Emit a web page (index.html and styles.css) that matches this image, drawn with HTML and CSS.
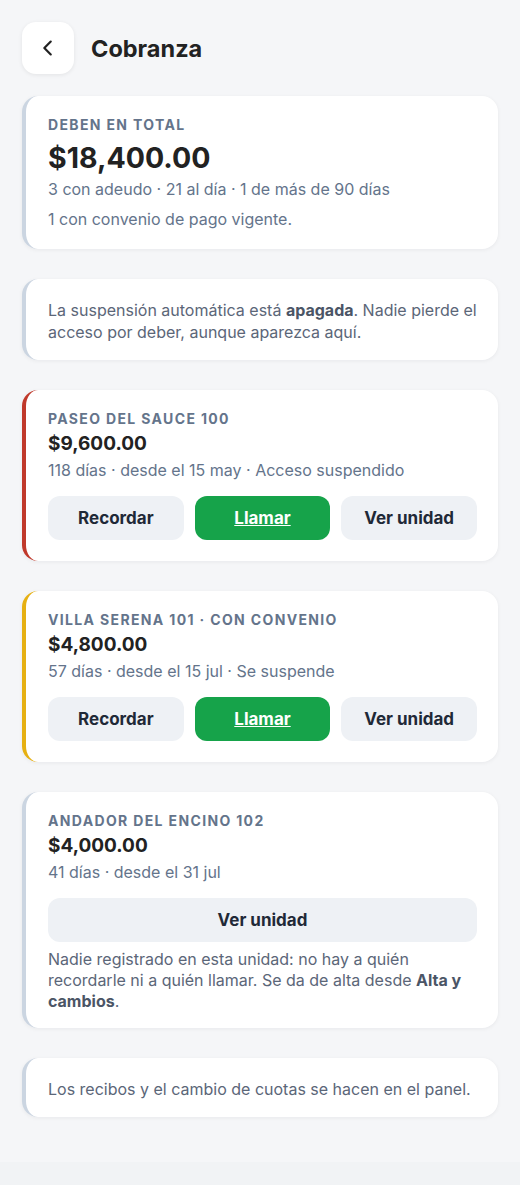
FILE: index.html
```html
<!DOCTYPE html>
<html lang="es">
<head>
    <meta charset="UTF-8">
    <meta name="viewport" content="width=device-width, initial-scale=1.0">
    <title>Cobranza</title>
    <link rel="stylesheet" href="styles.css">
</head>
<body>
    <div class="page">
        <header class="top-bar">
            <button class="back-btn" aria-label="Volver">
                <svg width="22" height="22" viewBox="0 0 24 24" fill="none" stroke="#222" stroke-width="2.4" stroke-linecap="round" stroke-linejoin="round"><path d="M15 5l-7 7 7 7"/></svg>
            </button>
            <h1>Cobranza</h1>
        </header>

        <section class="card">
            <div class="label">Deben en total</div>
            <div class="total">$18,400.00</div>
            <p class="meta">3 con adeudo · 21 al día · 1 de más de 90 días</p>
            <p class="meta">1 con convenio de pago vigente.</p>
        </section>

        <section class="card card-note">
            <p class="note">La suspensión automática está <b>apagada</b>. Nadie pierde el acceso por deber, aunque aparezca aquí.</p>
        </section>

        <section class="card card-danger">
            <div class="label">Paseo del Sauce 100</div>
            <div class="amount">$9,600.00</div>
            <p class="meta">118 días · desde el 15 may · Acceso suspendido</p>
            <div class="actions">
                <button class="btn">Recordar</button>
                <button class="btn btn-call">Llamar</button>
                <button class="btn">Ver unidad</button>
            </div>
        </section>

        <section class="card card-warn">
            <div class="label">Villa Serena 101 · Con convenio</div>
            <div class="amount">$4,800.00</div>
            <p class="meta">57 días · desde el 15 jul · Se suspende</p>
            <div class="actions">
                <button class="btn">Recordar</button>
                <button class="btn btn-call">Llamar</button>
                <button class="btn">Ver unidad</button>
            </div>
        </section>

        <section class="card">
            <div class="label">Andador del Encino 102</div>
            <div class="amount">$4,000.00</div>
            <p class="meta">41 días · desde el 31 jul</p>
            <div class="actions single">
                <button class="btn">Ver unidad</button>
            </div>
            <p class="note detail">Nadie registrado en esta unidad: no hay a quién recordarle ni a quién llamar. Se da de alta desde <b>Alta y cambios</b>.</p>
        </section>

        <section class="card card-note">
            <p class="note">Los recibos y el cambio de cuotas se hacen en el panel.</p>
        </section>
    </div>
</body>
</html>
```

FILE: styles.css
```css
html {
    background: #f1f3f5;
}

body {
    margin: 0;
    font-family: Inter, "Noto Sans", Arial, sans-serif;
    color: #222;
}

.page {
    background: #f5f6f8;
    padding: 22px 22px 45px;
    display: flex;
    flex-direction: column;
    gap: 30px;
}

.top-bar {
    display: flex;
    align-items: center;
    gap: 17px;
    margin-bottom: -8px;
}

.back-btn {
    width: 52px;
    height: 52px;
    border: none;
    border-radius: 14px;
    background: #fff;
    box-shadow: 0 1px 4px rgba(0, 0, 0, 0.08);
    display: flex;
    align-items: center;
    justify-content: center;
    padding: 0;
}

h1 {
    margin: 0;
    font-size: 23.5px;
    font-weight: 700;
    color: #222;
}

.card {
    background: #fff;
    border-radius: 16px;
    border-left: 4px solid #cbd5e1;
    box-shadow: 0 1px 4px rgba(15, 23, 42, 0.06);
    padding: 20px 21px 21px 22px;
}

.card-note {
    padding-top: 20px;
    padding-bottom: 17px;
}

.card-danger {
    border-left-color: #c0392b;
}

.card-warn {
    border-left-color: #e6b012;
}

.label {
    font-size: 14px;
    font-weight: 700;
    letter-spacing: 1.35px;
    text-transform: uppercase;
    color: #64748b;
    line-height: 18px;
}

.total {
    font-size: 28.5px;
    font-weight: 700;
    color: #222;
    line-height: 36px;
    margin-top: 6px;
}

.amount {
    font-size: 19px;
    font-weight: 700;
    color: #222;
    line-height: 26px;
    margin-top: 3px;
}

.meta {
    margin: 2px 0 0;
    font-size: 16px;
    line-height: 22px;
    color: #64748b;
}

.meta + .meta {
    margin-top: 8px;
}

.card > .meta:last-child {
    margin-bottom: -2px;
}

.note {
    margin: 0;
    font-size: 16px;
    line-height: 22px;
    color: #5b6678;
}

.note b {
    color: #4b5566;
}

.note.detail {
    line-height: 21px;
    margin: 7px 0 -5px;
}

.actions {
    display: grid;
    grid-template-columns: 1fr 1fr 1fr;
    gap: 11px;
    margin-top: 15px;
}

.actions.single {
    grid-template-columns: 1fr;
}

.btn {
    height: 44px;
    border: none;
    border-radius: 12px;
    background: #eef1f5;
    color: #1f2937;
    font-family: inherit;
    font-size: 17px;
    font-weight: 700;
}

.btn-call {
    background: #16a34a;
    color: #fff;
    text-decoration: underline;
}
```
